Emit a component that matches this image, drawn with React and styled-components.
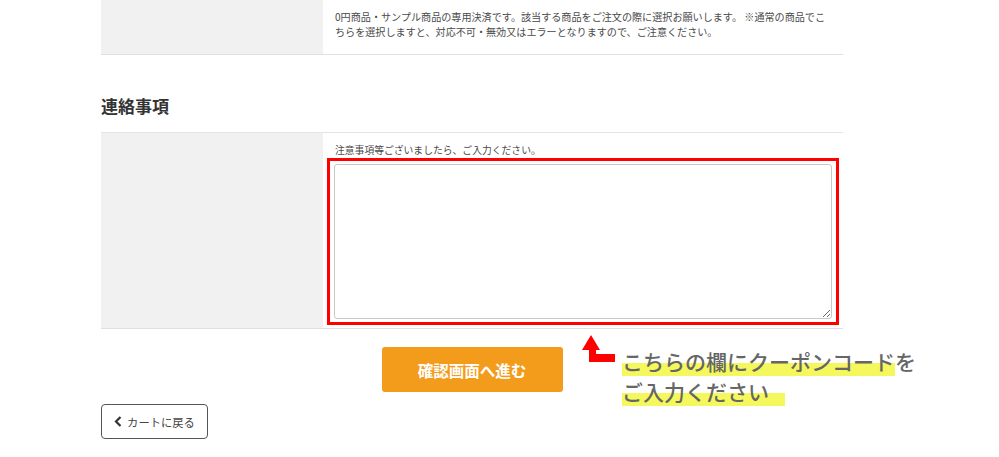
import React from "react";
import styled, { createGlobalStyle } from "styled-components";

const GlobalStyle = createGlobalStyle`
  body {
    margin: 0;
    background: #ffffff;
    font-family: "Noto Sans CJK JP", "Noto Sans", sans-serif;
    color: #333333;
  }
`;

const App = () => {
  return (
    <Page>
      <GlobalStyle />
      <Table $top={false}>
        <LabelCell />
        <ContentCell $padding="9px 12px 15px">
          <Note>
            0円商品・サンプル商品の専用決済です。該当する商品をご注文の際に選択お願いします。
            ※通常の商品でこちらを選択しますと、対応不可・無効又はエラーとなりますので、ご注意ください。
          </Note>
        </ContentCell>
      </Table>

      <Heading>連絡事項</Heading>

      <Table $top>
        <LabelCell />
        <ContentCell $padding="10px 12px 3px">
          <Hint>注意事項等ございましたら、ご入力ください。</Hint>
          <Marker>
            <TextArea />
          </Marker>
        </ContentCell>
      </Table>

      <ActionRow>
        <SubmitButton type="button">確認画面へ進む</SubmitButton>
        <Annotation>
          <svg width="34" height="28" viewBox="0 0 34 28">
            <path
              d="M9 0 L18 15 L14 15 L14 19 L33 19 L33 27 L7 27 L7 15 L0 15 Z"
              fill="#ff0000"
            />
          </svg>
          <Callout>
            <Line>
              <Mark>こちらの欄にクーポンコード</Mark>を
            </Line>
            <Line>
              <Mark $extra="16px">ご入力ください</Mark>
            </Line>
          </Callout>
        </Annotation>
      </ActionRow>

      <BackButton type="button">
        <svg width="9" height="11" viewBox="0 0 9 11">
          <path
            d="M6.5 1 L2 5.5 L6.5 10"
            fill="none"
            stroke="#333"
            strokeWidth="2.2"
          />
        </svg>
        カートに戻る
      </BackButton>
    </Page>
  );
};

export default App;

const Page = styled.div`
  width: 742px;
  padding-left: 101px;
  display: flex;
  flex-direction: column;
`;

const Table = styled.div`
  display: grid;
  grid-template-columns: 222px 1fr;
  border-top: ${(p) => (p.$top ? "1px solid #e4e4e4" : "none")};
  border-bottom: 1px solid #e0e0e0;
`;

const LabelCell = styled.div`
  background: #f1f1f1;
`;

const ContentCell = styled.div`
  padding: ${(p) => p.$padding};
  display: flex;
  flex-direction: column;
`;

const Note = styled.p`
  margin: 0;
  font-size: 10.1px;
  line-height: 15px;
  color: #4a4a4a;
`;

const Hint = styled.p`
  margin: 0;
  font-size: 9.8px;
  line-height: 15px;
  color: #4a4a4a;
`;

const Heading = styled.h2`
  margin: 39px 0 14px;
  font-size: 17px;
  line-height: 24px;
  font-weight: 700;
  color: #333;
`;

const Marker = styled.div`
  margin: 0 -8px;
  border: 3px solid #ff0000;
  padding: 3px 4px;
`;

const TextArea = styled.textarea`
  display: block;
  width: 100%;
  height: 155px;
  box-sizing: border-box;
  border: 1px solid #c8c8c8;
  border-radius: 3px;
  background: #fff;
  resize: both;
`;

const ActionRow = styled.div`
  position: relative;
  display: flex;
  justify-content: center;
  margin-top: 18px;
`;

const SubmitButton = styled.button`
  width: 181px;
  height: 45px;
  border: none;
  border-radius: 3px;
  background: #f39c1b;
  color: #ffffff;
  font-family: "Noto Sans CJK JP", sans-serif;
  font-size: 15.5px;
  font-weight: 700;
  cursor: pointer;
`;

const Annotation = styled.div`
  position: absolute;
  left: 481px;
  top: -12px;
  display: flex;
  align-items: flex-start;
  gap: 6px;
`;

const Callout = styled.div`
  margin-top: 11px;
  display: flex;
  flex-direction: column;
`;

const Line = styled.div`
  font-size: 21px;
  line-height: 30px;
  font-weight: 500;
  color: #666666;
  white-space: nowrap;
`;

const Mark = styled.span`
  padding-right: ${(p) => p.$extra || "0"};
  background: linear-gradient(transparent 56%, #f5f85c 56%, #f5f85c 100%);
`;

const BackButton = styled.button`
  align-self: flex-start;
  margin-top: 12px;
  width: 107px;
  height: 35px;
  display: flex;
  align-items: center;
  justify-content: center;
  gap: 4px;
  border: 1px solid #555;
  border-radius: 4px;
  background: #fff;
  color: #444;
  font-family: "Noto Sans CJK JP", sans-serif;
  font-size: 11.3px;
  cursor: pointer;
`;
